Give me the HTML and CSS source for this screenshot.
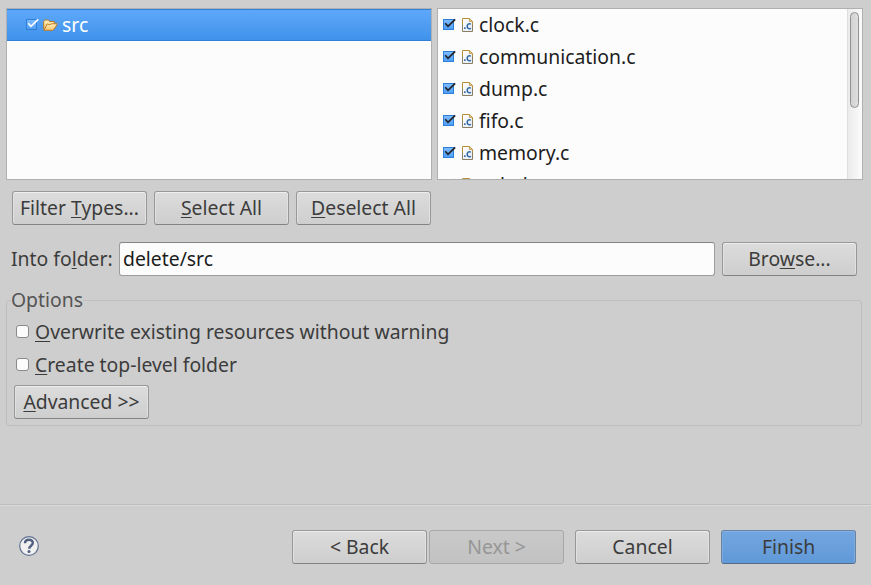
FILE: index.html
```html
<!DOCTYPE html>
<html lang="en">
<head>
<meta charset="utf-8">
<title>Import</title>
<link rel="stylesheet" href="styles.css">
</head>
<body>
<svg class="defs" width="0" height="0">
  <defs>
    <linearGradient id="blue" x1="0" y1="0" x2="0" y2="1"><stop offset="0" stop-color="#7fbcff"/><stop offset="1" stop-color="#4c9df5"/></linearGradient>
    <linearGradient id="paper" x1="0" y1="0" x2="1" y2="1"><stop offset="0" stop-color="#fff"/><stop offset="1" stop-color="#dfe9f5"/></linearGradient>
    <linearGradient id="fold" x1="0" y1="0" x2="0" y2="1"><stop offset="0" stop-color="#fff0c0"/><stop offset="1" stop-color="#f3c66d"/></linearGradient>
    <symbol id="check" viewBox="0 0 13 12">
      <rect x=".5" y="1.5" width="10" height="10" fill="url(#blue)" stroke="#2f7fd6"/>
      <path d="M2.200 5.200 5 8.300 12.200 1.300" fill="none" stroke="currentColor" stroke-width="1.700"/>
    </symbol>
    <symbol id="cfile" viewBox="0 0 11 14">
      <path d="M.5.5h7l3 3v10H.5z" fill="url(#paper)"/>
      <path d="M.5 7V.5h7l3 3V7" fill="none" stroke="#b98f3e"/>
      <path d="M.5 6.500v7h10v-7" fill="none" stroke="#8a7d60"/>
      <path d="M7.500.5v3h3z" fill="#e9c983" stroke="#b98f3e" stroke-width=".7"/>
      <path d="M2 9.300h1.600v1.700H2z" fill="#3a6da6"/>
      <path d="M8.900 6.100C6.500 5.200 5.200 6.300 5.200 8.300s1.600 3.100 3.700 2.100" fill="none" stroke="#2f639f" stroke-width="1.500"/>
    </symbol>
  </defs>
</svg>
<main class="dialog">
  <section class="panels">
    <div class="panel tree">
      <div class="row selected">
        <svg class="check"><use href="#check"/></svg>
        <svg class="folder" viewBox="0 0 15 12"><path d="M.7 10.500V2.500L2 1h3.500l1 1.500h4.800v3" fill="url(#fold)" stroke="#bd7a25"/><path d="M1 11.300 4.200 5l2.500.700 2-.9h5.700L11.300 10l-1.500 1.300z" fill="url(#fold)" stroke="#c07a22"/></svg>
        <span>src</span>
      </div>
    </div>
    <div class="panel files">
      <div class="list">
        <div class="row"><svg class="check"><use href="#check"/></svg><svg class="cfile"><use href="#cfile"/></svg><span>clock.c</span></div>
        <div class="row"><svg class="check"><use href="#check"/></svg><svg class="cfile"><use href="#cfile"/></svg><span>communication.c</span></div>
        <div class="row"><svg class="check"><use href="#check"/></svg><svg class="cfile"><use href="#cfile"/></svg><span>dump.c</span></div>
        <div class="row"><svg class="check"><use href="#check"/></svg><svg class="cfile"><use href="#cfile"/></svg><span>fifo.c</span></div>
        <div class="row"><svg class="check"><use href="#check"/></svg><svg class="cfile"><use href="#cfile"/></svg><span>memory.c</span></div>
        <div class="row"><svg class="check"><use href="#check"/></svg><svg class="cfile"><use href="#cfile"/></svg><span>oshal.c</span></div>
      </div>
      <div class="scrollbar"><div class="thumb"></div></div>
    </div>
  </section>
  <div class="actions">
    <button class="btn">Filter <u>T</u>ypes...</button>
    <button class="btn"><u>S</u>elect All</button>
    <button class="btn"><u>D</u>eselect All</button>
  </div>
  <div class="target">
    <label for="folder">Into fo<u>l</u>der:</label>
    <input id="folder" type="text" value="delete/src" spellcheck="false">
    <button class="btn">Bro<u>w</u>se...</button>
  </div>
  <fieldset class="options">
    <legend>Options</legend>
    <label class="option"><span class="box"></span><span><u>O</u>verwrite existing resources without warning</span></label>
    <label class="option"><span class="box"></span><span><u>C</u>reate top-level folder</span></label>
    <button class="btn"><u>A</u>dvanced &gt;&gt;</button>
  </fieldset>
  <footer class="footer">
    <svg class="help" viewBox="0 0 20 20"><circle cx="10" cy="10" r="9.300" fill="#f1f1f1" stroke="#60708f" stroke-width="1.200"/><path d="M6 7.300C6 2.500 14 2.600 13.800 7c-.1 2.700-3.600 2.700-3.600 5.700" fill="none" stroke="#506080" stroke-width="2.500"/><circle cx="10" cy="15.500" r="1.500" fill="#506080"/></svg>
    <button class="btn">&lt; Back</button>
    <button class="btn next" disabled>Next &gt;</button>
    <button class="btn cancel">Cancel</button>
    <button class="btn finish">Finish</button>
  </footer>
</main>
</body>
</html>
```
FILE: styles.css
```css
* { box-sizing: border-box; }
body {
  margin: 0;
  background: #cecece;
  color: #3c3c3c;
  font: 19.37px/32px "Noto Sans", sans-serif;
  overflow: hidden;
}
.defs { display: block; height: 0; }
.dialog {
  display: flex;
  flex-direction: column;
  height: 585px;
  padding-top: 8px;
}
u { text-decoration: underline; text-decoration-thickness: 1px; text-underline-offset: 2px; text-decoration-skip-ink: none; }
.panels { display: flex; gap: 5px; padding-left: 6px; }
.panel {
  width: 426px;
  height: 172px;
  border: 1px solid #b0b0b0;
  background: #fcfcfc;
  color: #1c1c1c;
  overflow: hidden;
}
.row { display: flex; align-items: center; height: 32px; padding-left: 5px; }
.check { width: 13px; height: 12px; color: #222; margin-top: -2px; }
.cfile { width: 11px; height: 14px; margin: 0 6px; }
.row span { line-height: 32px; }
.selected {
  padding-left: 19px;
  color: #fff;
  background: linear-gradient(#5ea8fb, #3f92ea);
  border: solid #2f80d8;
  border-width: 1px 0;
}
.selected .check { color: #fff; }
.folder { width: 15px; height: 12px; margin: 0 4px; }
.files { display: flex; }
.list { flex: 1; overflow: hidden; }
.scrollbar {
  width: 15px;
  padding: 3px 2px;
  border-left: 1px solid #dedede;
  background: linear-gradient(90deg, #ebebeb, #fbfbfb);
}
.thumb {
  width: 9px;
  height: 96px;
  border: 1px solid #929292;
  border-radius: 5px;
  background: linear-gradient(90deg, #d2d2d2, #dfdfdf);
}
.btn {
  width: 135px;
  height: 34px;
  padding: 0 0 1px;
  border: 1px solid #989898;
  border-bottom-color: #838383;
  border-radius: 3px;
  background: linear-gradient(#dcdcdc, #cecece);
  box-shadow: inset 0 1px #eee, inset 1px 0 #e1e1e1, inset -1px 0 #e1e1e1;
  color: inherit;
  font: inherit;
  white-space: nowrap;
}
.actions { display: flex; gap: 7px; margin-top: 11px; padding-left: 12px; }
.target { display: flex; align-items: center; margin-top: 17px; padding-left: 11px; }
.target label { width: 108px; white-space: nowrap; }
.target input {
  width: 596px;
  height: 34px;
  margin-right: 7px;
  padding: 0 3px 1px;
  border: 1px solid #9c9c9c;
  border-top-color: #858585;
  border-radius: 3px;
  background: #fcfcfc;
  color: #1c1c1c;
  font: inherit;
}
.options {
  width: 856px;
  height: 142px;
  margin: 8px 0 0 6px;
  padding: 0 0 0 7px;
  border: 1px solid #bebebe;
  border-radius: 3px;
}
.options legend { margin-left: -3px; padding: 0; color: #555; }
.option { display: flex; align-items: center; height: 33px; padding-left: 2px; }
.options legend + .option { margin-top: -1px; }
.box {
  width: 13px;
  height: 13px;
  margin-right: 6px;
  border: 1px solid #8a8a8a;
  border-radius: 3px;
  background: #fcfcfc;
}
.options .btn { display: block; margin-top: 4px; }
.footer {
  display: flex;
  align-items: center;
  height: 81px;
  margin-top: auto;
  padding: 4px 15px 0 19px;
  border-top: 1px solid #bebebe;
  box-shadow: inset 0 1px #dadada;
}
.help { width: 20px; height: 20px; margin: -2px auto 0 0; }
.next {
  margin: 0 11px 0 2px;
  border-color: #a8a8a8;
  background: linear-gradient(#c9c9c9, #c2c2c2);
  box-shadow: none;
  color: #969696;
}
.cancel { margin-right: 11px; }
.finish {
  border-color: #6882a2;
  border-bottom-color: #536a88;
  background: linear-gradient(#73a6e0, #6099d8);
  box-shadow: inset 0 1px #84b1e8, inset 1px 0 #7baae2, inset -1px 0 #7baae2;
}
```
